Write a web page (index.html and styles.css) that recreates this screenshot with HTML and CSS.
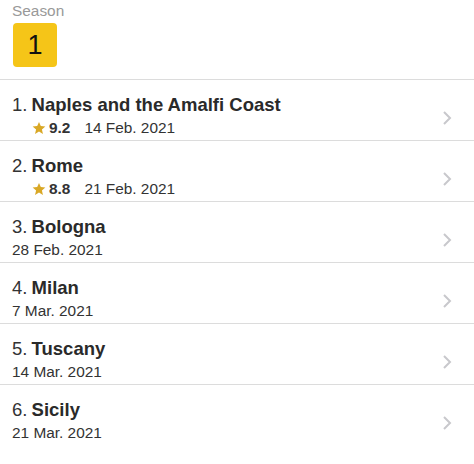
FILE: index.html
```html
<!DOCTYPE html>
<html>
<head>
<meta charset="utf-8">
<link rel="stylesheet" href="styles.css">
</head>
<body>
<div class="season">
  <div class="season-label">Season</div>
  <div class="season-box">1</div>
</div>
<ul class="episodes">
  <li class="ep">
    <div class="ep-main">
      <div class="ep-title">1. <b>Naples and the Amalfi Coast</b></div>
      <div class="ep-sub rated"><svg class="star" viewBox="0 0 24 24"><path d="M12 1.5l3.1 7.2 7.8.7-5.9 5.2 1.8 7.7L12 18.2l-6.8 4.1 1.8-7.7-5.9-5.2 7.8-.7z"/></svg><b class="rating">9.2</b><span>14 Feb. 2021</span></div>
    </div>
    <svg class="chev" viewBox="0 0 10 16"><path d="M2 2l6 6-6 6"/></svg>
  </li>
  <li class="ep">
    <div class="ep-main">
      <div class="ep-title">2. <b>Rome</b></div>
      <div class="ep-sub rated"><svg class="star" viewBox="0 0 24 24"><path d="M12 1.5l3.1 7.2 7.8.7-5.9 5.2 1.8 7.7L12 18.2l-6.8 4.1 1.8-7.7-5.9-5.2 7.8-.7z"/></svg><b class="rating">8.8</b><span>21 Feb. 2021</span></div>
    </div>
    <svg class="chev" viewBox="0 0 10 16"><path d="M2 2l6 6-6 6"/></svg>
  </li>
  <li class="ep">
    <div class="ep-main">
      <div class="ep-title">3. <b>Bologna</b></div>
      <div class="ep-sub"><span>28 Feb. 2021</span></div>
    </div>
    <svg class="chev" viewBox="0 0 10 16"><path d="M2 2l6 6-6 6"/></svg>
  </li>
  <li class="ep">
    <div class="ep-main">
      <div class="ep-title">4. <b>Milan</b></div>
      <div class="ep-sub"><span>7 Mar. 2021</span></div>
    </div>
    <svg class="chev" viewBox="0 0 10 16"><path d="M2 2l6 6-6 6"/></svg>
  </li>
  <li class="ep">
    <div class="ep-main">
      <div class="ep-title">5. <b>Tuscany</b></div>
      <div class="ep-sub"><span>14 Mar. 2021</span></div>
    </div>
    <svg class="chev" viewBox="0 0 10 16"><path d="M2 2l6 6-6 6"/></svg>
  </li>
  <li class="ep last">
    <div class="ep-main">
      <div class="ep-title">6. <b>Sicily</b></div>
      <div class="ep-sub"><span>21 Mar. 2021</span></div>
    </div>
    <svg class="chev" viewBox="0 0 10 16"><path d="M2 2l6 6-6 6"/></svg>
  </li>
</ul>
</body>
</html>
```
FILE: styles.css
```css
html, body {
  margin: 0;
  padding: 0;
  background: #fff;
  font-family: "Liberation Sans", Arial, sans-serif;
  color: #222;
}
.season {
  padding: 3px 12px 12px 12px;
  border-bottom: 1px solid #dcdcdc;
}
.season-label {
  font-size: 15.4px;
  line-height: 16px;
  color: #999;
}
.season-box {
  margin-top: 4px;
  margin-left: 1px;
  width: 44px;
  height: 44px;
  border-radius: 4px;
  background: #f5c518;
  color: #111;
  font-size: 27px;
  display: flex;
  align-items: center;
  justify-content: center;
}
.episodes {
  list-style: none;
  margin: 0;
  padding: 0;
}
.ep {
  display: flex;
  align-items: center;
  padding: 14px 12px 3px 12px;
  border-bottom: 1px solid #dcdcdc;
}
.ep.last {
  border-bottom: none;
}
.ep-main {
  flex: 1;
}
.ep-title {
  font-size: 18.5px;
  line-height: 21px;
  color: #333;
  word-spacing: -1px;
}
.ep-title b {
  color: #2a2a2a;
  word-spacing: 0;
}
.ep-sub {
  margin-top: 4px;
  font-size: 15.4px;
  line-height: 18px;
  color: #333;
  display: flex;
  align-items: center;
}
.ep-sub.rated {
  padding-left: 20px;
}
.star {
  width: 14px;
  height: 14px;
  fill: #d9a826;
  margin-right: 3px;
  margin-top: -1px;
}
.rating {
  color: #333;
  margin-right: 14px;
}
.chev {
  width: 10px;
  height: 16px;
  fill: none;
  stroke: #c8c8cc;
  stroke-width: 2;
  margin-right: 10px;
  margin-top: 4px;
}
```
